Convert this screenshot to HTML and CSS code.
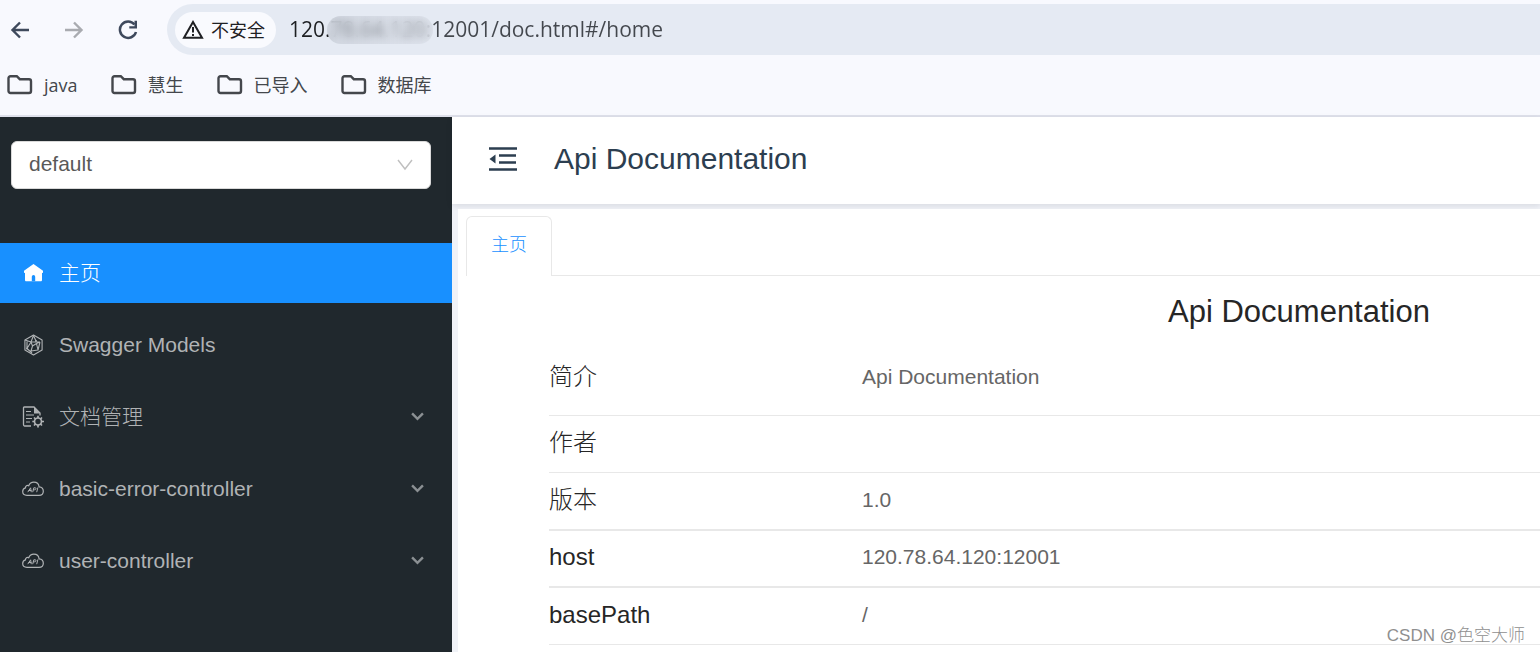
FILE: index.html
```html
<!DOCTYPE html>
<html lang="zh-CN">
<head>
<meta charset="utf-8">
<title>Api Documentation</title>
<link rel="stylesheet" href="styles.css">
</head>
<body>
<svg class="defs" width="0" height="0" aria-hidden="true">
  <symbol id="folder" viewBox="0 0 26 20"><path d="M3.500 1.200h6.300l3 3H22a2 2 0 0 1 2 2V16a2 2 0 0 1-2 2H3.500a2 2 0 0 1-2-2V3.200a2 2 0 0 1 2-2z" fill="none" stroke="currentColor" stroke-width="2.400"/></symbol>
  <symbol id="chevron" viewBox="0 0 12 8"><path d="M1 1.200l5 5 5-5" fill="none" stroke="currentColor" stroke-width="2.200"/></symbol>
  <symbol id="cloud" viewBox="0 0 22 16"><g fill="none" stroke="currentColor" stroke-width="1.200" stroke-linecap="round" stroke-linejoin="round"><path d="M5 14.300C2.300 14.300.7 12.700.7 10.500.7 8.600 1.900 7.300 3.500 6.900 3.200 4.900 5.200 3.800 6.700 4.800 7.600 2.500 9.500 1.200 11.800 1.200c3 0 5 2 5.300 4.700 2.500.2 4.200 2 4.200 4.300 0 2.300-1.800 4.100-4.300 4.100z"/><path d="M6 10.800l2.600-4 .6 4M6.900 9.500h2.200M10.800 10.800l1-4h1.400c1.300 0 1.100 2-.6 2h-1.300M14.800 10.800l1-4" stroke-width="1"/></g></symbol>
</svg>

<header class="browser">
  <div class="toolbar">
    <button class="nav" aria-label="后退"><svg width="20" height="18" viewBox="0 0 20 18"><path d="M19 9H3M10 1.500L2.500 9l7.500 7.500" fill="none" stroke="currentColor" stroke-width="2.400"/></svg></button>
    <button class="nav nav-off" aria-label="前进" disabled><svg width="20" height="18" viewBox="0 0 20 18"><path d="M1 9h16M10 1.500L17.500 9 10 16.500" fill="none" stroke="currentColor" stroke-width="2.400"/></svg></button>
    <button class="nav" aria-label="重新加载"><svg width="20" height="20" viewBox="0 0 20 20"><path d="M16.500 4.500A8.200 8.200 0 1 0 18 12" fill="none" stroke="currentColor" stroke-width="2.500"/><path d="M19 .8v7.700h-7.700V6.200h5.200V.8z" fill="currentColor"/></svg></button>
    <div class="address">
      <button class="security"><svg width="22" height="19" viewBox="0 0 22 19"><path d="M11 2L2 17.800h18z" fill="none" stroke="currentColor" stroke-width="2"/><path d="M11 7v5.500M11 14v2" stroke="currentColor" stroke-width="2"/></svg>不安全</button>
      <div class="url-box">
        <input class="url" type="text" aria-label="地址栏" value="120.78.64.120:12001/doc.html#/home">
        <span class="smudge"></span>
      </div>
    </div>
  </div>
  <nav class="bookmarks">
    <a href="#java"><svg width="26" height="20"><use href="#folder"/></svg>java</a>
    <a href="#hs"><svg width="26" height="20"><use href="#folder"/></svg>慧生</a>
    <a href="#imported"><svg width="26" height="20"><use href="#folder"/></svg>已导入</a>
    <a href="#db"><svg width="26" height="20"><use href="#folder"/></svg>数据库</a>
  </nav>
</header>

<div class="app">
  <aside class="sidebar">
    <div class="picker">
      <select class="group" aria-label="分组"><option>default</option></select>
      <svg class="picker-arrow" width="16" height="12" viewBox="0 0 16 12"><path d="M1 1l7 9 7-9" fill="none" stroke="currentColor" stroke-width="1.400"/></svg>
    </div>
    <nav class="menu">
      <a class="item item-active" href="#/home"><svg class="icon" width="22" height="22" viewBox="0 0 22 22"><path d="M11.500 2L2 8.700v2.100l1 .2v7c0 .8.500 1.300 1.300 1.300h14.400c.8 0 1.300-.5 1.300-1.300v-7l1-.2V8.700z" fill="currentColor"/><path d="M9.800 19.300v-4.600a1.700 1.700 0 0 1 3.400 0v4.600z" fill="#1890ff"/></svg><span>主页</span></a>
      <a class="item" href="#/models"><svg class="icon" width="22" height="22" viewBox="0 0 22 22"><g fill="none" stroke="currentColor" stroke-width="1.100" stroke-linejoin="round"><path d="M11.500 1l8.600 5v10l-8.600 5-8.600-5V6z"/><path d="M11.500 1.500L9 8M11.500 1.500L14 7M3 6l6 2h9M5 7.500v7l5 4.500M9 8l-4 6.500M9 8l1.500 4 4-2.500L18 8M10.500 12L9 17l7-1 2-8M14.500 9.500L16 16"/></g><circle cx="5" cy="14.500" r="1" fill="currentColor"/><circle cx="14" cy="7" r="1" fill="currentColor"/></svg><span>Swagger Models</span></a>
      <a class="item" href="#/docs"><svg class="icon" width="22" height="22" viewBox="0 0 22 22"><path d="M9 20H2.500C1.500 20 1.500 19.500 1.500 18.500V2.500C1.500 1.500 1.500 1 2.500 1H12l6 6v2.500" fill="none" stroke="currentColor" stroke-width="1.300"/><path d="M12 1v6.500h6z" fill="currentColor"/><path d="M4 5.500h5M4 9h8M4 12.500h6M4 16h4" stroke="currentColor" stroke-width="1.200"/><circle cx="16" cy="15.500" r="3.500" fill="none" stroke="currentColor" stroke-width="1.700"/><path d="M16 9.800V12M16 19v2.500M10.300 15.500h2.200M19.500 15.500H22M12 11.500l1.500 1.500M18.500 18l1.500 1.500M20 11.500L18.500 13M13.500 18L12 19.500" stroke="currentColor" stroke-width="1.700"/></svg><span>文档管理</span><svg class="more" width="13" height="9"><use href="#chevron"/></svg></a>
      <a class="item" href="#/basic"><svg class="icon" width="22" height="16"><use href="#cloud"/></svg><span>basic-error-controller</span><svg class="more" width="13" height="9"><use href="#chevron"/></svg></a>
      <a class="item" href="#/user"><svg class="icon" width="22" height="16"><use href="#cloud"/></svg><span>user-controller</span><svg class="more" width="13" height="9"><use href="#chevron"/></svg></a>
    </nav>
  </aside>

  <main class="main">
    <div class="topbar">
      <button class="fold" aria-label="收起菜单"><svg width="28" height="24" viewBox="0 0 28 24"><path d="M0 1.500h28M10 8.500h17M10 15.500h17M0 22.500h28" stroke="currentColor" stroke-width="2.400"/><path d="M6.500 7.500v9L.5 12z" fill="currentColor"/></svg></button>
      <span>Api Documentation</span>
    </div>
    <div class="content">
      <div class="tabs" role="tablist"><button class="tab" role="tab" aria-selected="true">主页</button></div>
      <section class="info">
        <h1>Api Documentation</h1>
        <table>
          <tbody>
            <tr class="intro"><th scope="row">简介</th><td>Api Documentation</td></tr>
            <tr><th scope="row">作者</th><td></td></tr>
            <tr><th scope="row">版本</th><td>1.0</td></tr>
            <tr><th scope="row">host</th><td>120.78.64.120:12001</td></tr>
            <tr><th scope="row">basePath</th><td>/</td></tr>
          </tbody>
        </table>
      </section>
    </div>
  </main>
</div>
<div class="credit">CSDN @色空大师</div>
</body>
</html>
```
FILE: styles.css
```css
* { box-sizing: border-box; }

body {
  margin: 0;
  height: 100vh;
  display: flex;
  flex-direction: column;
  overflow: hidden;
  font-family: "Liberation Sans", "Noto Sans CJK SC", sans-serif;
  font-size: 21px;
  font-weight: 300;
  line-height: 30px;
  background: #fff;
}

button { border: 0; padding: 0; background: none; font: inherit; color: inherit; }
a { color: inherit; text-decoration: none; }
svg { display: block; flex: none; }
.defs { position: absolute; }

/* Browser chrome */
.browser {
  flex: none;
  background: #f8f9fe;
  border-bottom: 2px solid #dfe1eb;
  font-family: "Open Sans", "Noto Sans CJK SC", sans-serif;
  font-weight: 400;
}
.toolbar { display: flex; align-items: center; padding: 4px 0 0 10px; }
.nav { margin-right: 34px; color: #3e495c; }
.nav-off { color: #a9abb0; }
.address {
  flex: 1;
  display: flex;
  align-items: center;
  height: 51px;
  margin-left: -5px;
  padding-left: 8px;
  border-radius: 26px 0 0 26px;
  background: #e5eaf3;
}
.security {
  display: flex;
  align-items: center;
  gap: 7px;
  height: 36px;
  padding: 0 11px 0 7px;
  border-radius: 18px;
  background: #f9fafe;
  color: #1f2023;
  font-size: 18px;
}
.url-box { position: relative; flex: 1; margin-left: 13px; }
.url {
  display: block;
  width: 100%;
  padding: 0 0 2px;
  border: 0;
  outline: 0;
  background: linear-gradient(90deg, #1d1f22 40px, #43474d 40px) text;
  -webkit-text-fill-color: transparent;
  font: 21px/30px "Open Sans", sans-serif;
}
.smudge {
  position: absolute;
  left: 38px;
  top: 2px;
  width: 106px;
  height: 28px;
  border-radius: 14px;
  background: linear-gradient(90deg, rgba(190, 196, 206, 0.5), rgba(214, 219, 228, 0.4));
  backdrop-filter: blur(4px);
}
.bookmarks {
  display: flex;
  align-items: center;
  gap: 33px;
  height: 60px;
  padding-left: 7px;
  color: #44474c;
  font-size: 18px;
}
.bookmarks a { display: flex; align-items: center; gap: 11px; }

/* Application */
.app { flex: 1; min-height: 0; display: flex; }
.sidebar { flex: none; width: 452px; padding-top: 24px; background: #20282d; }
.picker { position: relative; margin: 0 21px 54px 11px; }
.group {
  display: block;
  appearance: none;
  width: 100%;
  height: 48px;
  padding: 0 17px 2px;
  border: 1px solid #d9d9d9;
  border-radius: 6px;
  background: #fff;
  color: #595959;
  font: inherit;
}
.picker-arrow { position: absolute; right: 18px; top: 18px; color: #bfbfbf; }
.menu { display: flex; flex-direction: column; gap: 12px; }
.item {
  display: flex;
  align-items: center;
  height: 60px;
  padding: 0 28px 0 22px;
  color: #b0b3b5;
}
.item-active { background: #1890ff; color: #fff; }
.icon { margin-right: 15px; }
.more { margin: 0 0 2px auto; color: #8b9093; }

.main { flex: 1; min-width: 0; display: flex; flex-direction: column; background: #f0f2f7; }
.topbar {
  flex: none;
  display: flex;
  align-items: center;
  gap: 37px;
  height: 87px;
  padding: 0 0 3px 37px;
  background: #fff;
  box-shadow: 0 2px 6px rgba(0, 21, 41, 0.1);
  color: #2c3e50;
  font-size: 30px;
}
.content { flex: 1; min-height: 0; margin: 5px 0 0 6px; padding: 7px 0 0 8px; overflow: hidden; background: #fff; }
.tabs { display: flex; border-bottom: 1px solid #e8e8e8; }
.tab {
  height: 60px;
  margin-bottom: -1px;
  padding: 0 24px 3px;
  border: 1px solid #e8e8e8;
  border-bottom: 0;
  border-radius: 6px 6px 0 0;
  background: #fff;
  color: #1890ff;
  font-size: 18px;
}
.info { width: 1500px; margin-left: 83px; }
.info h1 {
  margin: 0;
  padding: 16px 0 10px;
  color: #262626;
  font-size: 31px;
  line-height: 40px;
  font-weight: 400;
  text-align: center;
}
.info table { width: 100%; table-layout: fixed; border-collapse: separate; border-spacing: 0; }
.info th, .info td { height: 57px; padding: 0 0 3px; border-bottom: 1px solid #e8e8e8; text-align: left; font-weight: 300; }
.info tr:nth-child(3) > *, .info tr:nth-child(4) > * { border-bottom-width: 2px; }
.info tr:nth-child(3) > * { height: 58px; }
.info th { width: 313px; color: #262626; font-size: 24px; }
.info td { color: #666; }
.info .intro th, .info .intro td { height: 74px; padding-bottom: 4px; }

.credit {
  position: absolute;
  right: 15px;
  bottom: 3px;
  color: #8f8f8f;
  font-size: 17px;
  line-height: 26px;
}
```
